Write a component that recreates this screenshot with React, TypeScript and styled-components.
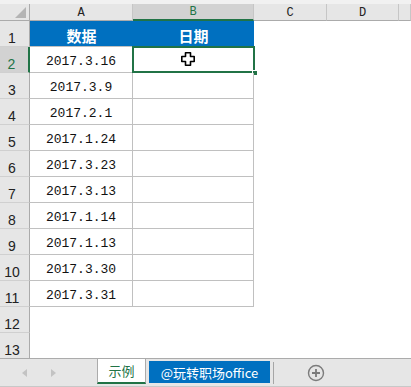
import styled, { createGlobalStyle } from 'styled-components'

const Global = createGlobalStyle`
  body {
    margin: 0;
    background: #fff;
  }
  * {
    box-sizing: border-box;
  }
`

const GREEN = '#217346'
const BLUE = '#0070c0'

const Sheet = styled.div`
  width: 411px;
  height: 387px;
  display: flex;
  flex-direction: column;
  overflow: hidden;
  font-family: 'Liberation Sans', 'Noto Sans CJK SC', sans-serif;
`

const TopStrip = styled.div`
  height: 4px;
  background: #f1f1f1;
`

const Grid = styled.div`
  flex: 1;
  overflow: hidden;
  display: grid;
  grid-template-columns: 30px 103px 121px 73px 72px 1fr;
  grid-template-rows: 17px;
  grid-auto-rows: 26px;
`

const Corner = styled.div`
  position: relative;
  background: #e6e6e6;
  border-right: 1px solid #ababab;
  border-bottom: 1px solid #ababab;

  svg {
    position: absolute;
    right: 3px;
    bottom: 2px;
  }
`

const ColHead = styled.div<{ $selected?: boolean }>`
  display: flex;
  align-items: center;
  justify-content: center;
  background: ${({ $selected }) => ($selected ? '#d2d2d2' : '#e6e6e6')};
  border-right: 1px solid #c6c6c6;
  border-bottom: ${({ $selected }) => ($selected ? `2px solid ${GREEN}` : '1px solid #ababab')};
  color: ${({ $selected }) => ($selected ? GREEN : '#222')};
  font-family: 'Liberation Mono', monospace;
  font-size: 12px;
  padding-top: 1px;
`

const RowHead = styled.div<{ $selected?: boolean }>`
  display: flex;
  align-items: flex-end;
  justify-content: center;
  padding: 0 5px 0 0;
  background: ${({ $selected }) => ($selected ? '#d2d2d2' : '#e6e6e6')};
  border-right: ${({ $selected }) => ($selected ? `2px solid ${GREEN}` : '1px solid #ababab')};
  border-bottom: 1px solid #d0d0d0;
  color: ${({ $selected }) => ($selected ? GREEN : '#222')};
  font-size: 14px;
`

const HeadCell = styled.div`
  display: flex;
  align-items: center;
  justify-content: center;
  padding-top: 3px;
  background: ${BLUE};
  border-bottom: 1px solid #c0c0c0;
  color: #fff;
  font-family: 'Noto Sans CJK SC', sans-serif;
  font-weight: 700;
  font-size: 15px;
`

const DataCell = styled.div`
  position: relative;
  display: flex;
  align-items: center;
  justify-content: center;
  padding-top: 3px;
  border-right: 1px solid #c0c0c0;
  border-bottom: 1px solid #c0c0c0;
  color: #111;
  font-family: 'Liberation Mono', monospace;
  font-size: 13px;
`

const Blank = styled.div``

const Selection = styled.div`
  position: absolute;
  left: -1px;
  top: -1px;
  right: -2px;
  bottom: -1px;
  border: 2px solid ${GREEN};
  pointer-events: none;
`

const FillHandle = styled.div`
  position: absolute;
  right: -5px;
  bottom: -5px;
  width: 6px;
  height: 6px;
  background: ${GREEN};
  border: 1px solid #fff;
`

const Cursor = styled.svg`
  position: absolute;
  left: 48px;
  top: 5px;
`

const TabBar = styled.div`
  height: 29px;
  flex-shrink: 0;
  display: flex;
  align-items: flex-start;
  background: #e6e6e6;
  border-top: 1px solid #ababab;
  border-bottom: 1px solid #c8c8c8;
`

const Nav = styled.div`
  width: 97px;
  height: 27px;
  display: flex;
  align-items: center;
  gap: 24px;
  padding-left: 22px;
`

const SheetTab = styled.div`
  width: 49px;
  height: 25px;
  display: flex;
  align-items: center;
  justify-content: center;
  background: #fff;
  border-left: 1px solid #ababab;
  border-right: 1px solid #ababab;
  border-bottom: 2px solid ${GREEN};
  color: ${GREEN};
  font-family: 'Noto Sans CJK SC', sans-serif;
  font-size: 13px;
`

const NamedTab = styled.div`
  margin: 2px 0 0 3px;
  width: 121px;
  height: 22px;
  display: flex;
  align-items: center;
  justify-content: center;
  background: ${BLUE};
  color: #fff;
  font-family: 'Noto Sans CJK SC', sans-serif;
  font-size: 13px;
`

const Divider = styled.div`
  margin: 3px 0 0 3px;
  width: 1px;
  height: 22px;
  background: #a6a6a6;
`

const AddBtn = styled.svg`
  margin: 5px 0 0 33px;
`

const dates = [
  '2017.3.16',
  '2017.3.9',
  '2017.2.1',
  '2017.1.24',
  '2017.3.23',
  '2017.3.13',
  '2017.1.14',
  '2017.1.13',
  '2017.3.30',
  '2017.3.31',
]

const cols = ['A', 'B', 'C', 'D', 'E']

export default function App() {
  return (
    <>
      <Global />
      <Sheet>
        <TopStrip />
        <Grid>
          <Corner>
            <svg width="11" height="11" viewBox="0 0 11 11">
              <polygon points="11,0 11,11 0,11" fill="#b4b4b4" />
            </svg>
          </Corner>
          {cols.map(c => (
            <ColHead key={c} $selected={c === 'B'}>{c === 'E' ? '' : c}</ColHead>
          ))}

          <RowHead>1</RowHead>
          <HeadCell>数据</HeadCell>
          <HeadCell>日期</HeadCell>
          <Blank />
          <Blank />
          <Blank />

          {dates.map((d, i) => (
            <DataRow key={d} n={i + 2} value={d} />
          ))}

          <RowHead>12</RowHead>
          <Blank />
          <Blank />
          <Blank />
          <Blank />
          <Blank />
          <RowHead>13</RowHead>
          <Blank />
          <Blank />
          <Blank />
          <Blank />
          <Blank />
        </Grid>

        <TabBar>
          <Nav>
            <svg width="5" height="8" viewBox="0 0 5 8">
              <polygon points="5,0 5,8 0,4" fill="#c3c3c3" />
            </svg>
            <svg width="5" height="8" viewBox="0 0 5 8">
              <polygon points="0,0 0,8 5,4" fill="#c3c3c3" />
            </svg>
          </Nav>
          <SheetTab>示例</SheetTab>
          <NamedTab>@玩转职场office</NamedTab>
          <Divider />
          <AddBtn width="18" height="18" viewBox="0 0 18 18">
            <circle cx="9" cy="9" r="7.5" fill="none" stroke="#7b7b7b" strokeWidth="1.4" />
            <path d="M9 5v8M5 9h8" stroke="#7b7b7b" strokeWidth="1.8" />
          </AddBtn>
        </TabBar>
      </Sheet>
    </>
  )
}

function DataRow({ n, value }: { n: number; value: string }) {
  const selected = n === 2
  return (
    <>
      <RowHead $selected={selected}>{n}</RowHead>
      <DataCell>{value}</DataCell>
      <DataCell>
        {selected && (
          <>
            <Selection>
              <FillHandle />
            </Selection>
            <Cursor width="14" height="14" viewBox="0 0 14 14">
              <polygon
                points="4.5,0.8 9.5,0.8 9.5,4.5 13.2,4.5 13.2,9.5 9.5,9.5 9.5,13.2 4.5,13.2 4.5,9.5 0.8,9.5 0.8,4.5 4.5,4.5"
                fill="#fff"
                stroke="#000"
                strokeWidth="1.6"
                strokeLinejoin="round"
              />
            </Cursor>
          </>
        )}
      </DataCell>
      <Blank />
      <Blank />
      <Blank />
    </>
  )
}
